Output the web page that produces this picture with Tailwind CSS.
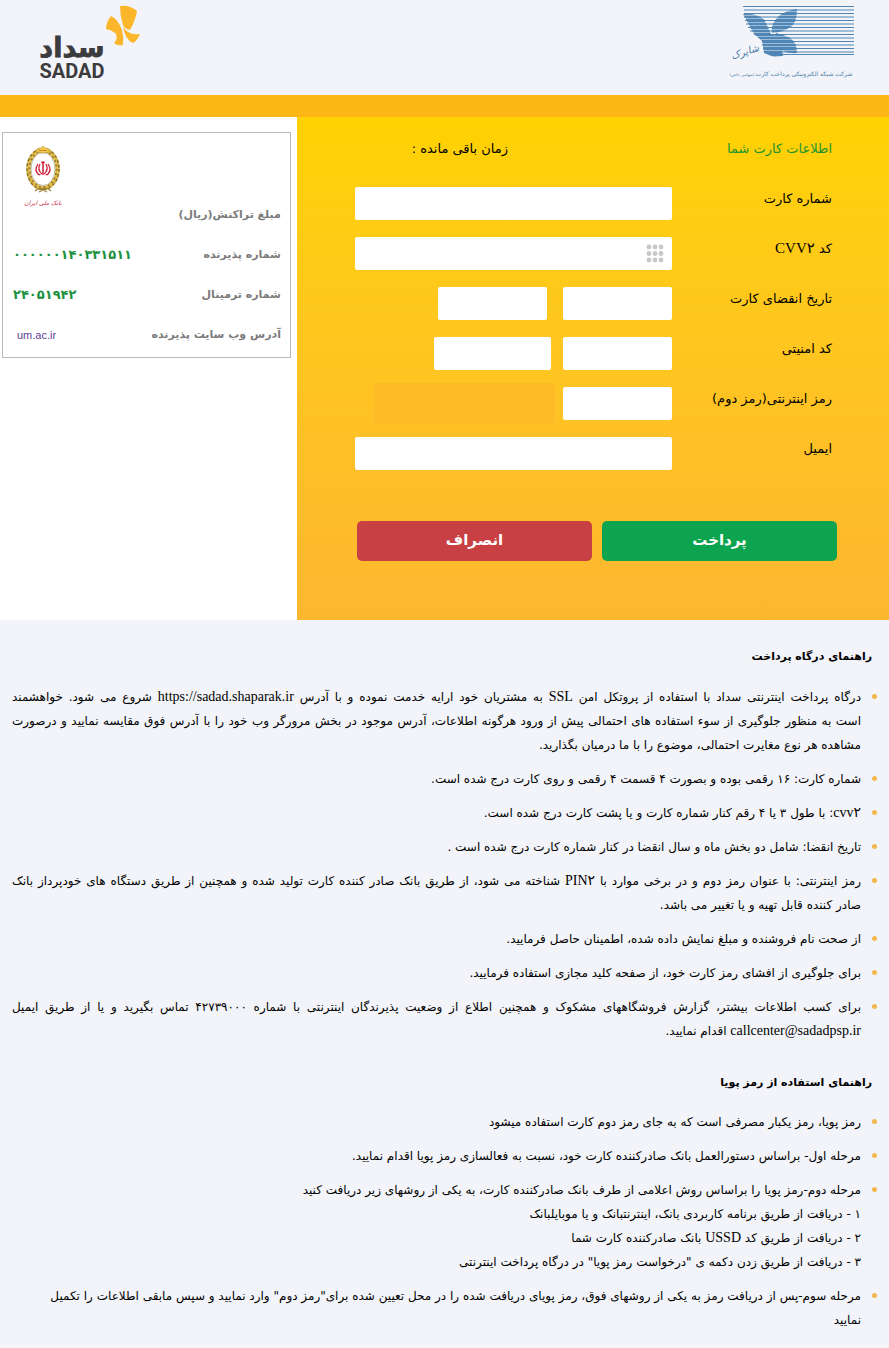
<!DOCTYPE html>
<html lang="fa" dir="rtl">
<head>
<meta charset="utf-8">
<meta name="viewport" content="width=device-width, initial-scale=1">
<title>درگاه پرداخت اینترنتی سداد</title>
<script src="https://cdn.jsdelivr.net/npm/@tailwindcss/browser@4"></script>
</head>
<body class="bg-[#f2f4f9] font-['DejaVu_Sans',sans-serif] text-xs text-black">
<header class="flex h-[95px] items-start justify-between pt-1 pr-[35px] pl-9">
  <svg class="h-[80px] w-[124px] overflow-visible" viewBox="0 0 124 80" role="img" aria-label="شاپرک">
    <defs>
      <clipPath id="wing"><path d="M13 10Q30 9 35 17L41 30L50 33L53 52L44 53L34 49L32 37L24 30Z"/><path d="M67 5Q67 17 62 22Q52 29 42 29Q40 20 50 11Q58 6 67 5Z"/><path d="M46 29Q62 32 66 41L67 49Q56 50 48 44L42 40Z"/></clipPath>
    </defs>
    <g stroke="#4f86b5" stroke-width="1.200">
      <path d="M13 2.500H124M14 6H124M14 9.500H124M14 13H124M15 16.500H124M16 20H124M18 23.500H124M20 27H124M24 30.500H124M30 34H124M32 37.500H124M32 41H124M33 44.500H124M36 48H124M42 50.500H124"/>
      <path clip-path="url(#wing)" stroke-width="2.900" d="M8 6H95M8 9.500H95M8 13H95M8 16.500H95M8 20H95M8 23.500H95M8 27H95M8 30.500H95M8 34H95M8 37.500H95M8 41H95M8 44.500H95M8 48H95M8 51H95"/>
    </g>
    <g fill="#4a7daa" font-family="DejaVu Sans" text-anchor="middle" direction="rtl">
      <text x="16" y="51" font-size="10" font-style="italic" transform="rotate(-18 16 51)">شاپرک</text>
      <text x="74" y="72" font-size="6">شرکت شبکه الکترونیکی پرداخت کارت</text>
      <text x="12" y="72" font-size="4">(سهامی خاص)</text>
    </g>
  </svg>
  <svg class="h-[80px] w-[106px]" viewBox="0 0 106 80" role="img" aria-label="سداد SADAD">
    <g fill="#3c3b3d" font-weight="bold" text-anchor="middle">
      <text x="36" y="53" font-family="DejaVu Sans" font-size="27" direction="rtl" stroke="#3c3b3d" stroke-width=".8">سداد</text>
      <text x="36" y="74" font-family="Roboto" font-size="20" direction="ltr">SADAD</text>
    </g>
    <path fill="#fcb62b" d="M84 2Q94 1 101 7Q100 15 94 26Q89 25 87 21Q84 12 84 2ZM75 12Q82 15 86 26Q88 34 87 41Q81 42 78 39Q82 35 80 30Q76 26 70 25Q70 18 75 12ZM87 22Q92 32 104 30Q101 37 97 39Q89 36 87 22Z"/>
  </svg>
</header>
<div class="h-[22px] bg-[#fdb714]"></div>

<main class="flex bg-white">
  <form class="flex-1 bg-linear-to-b from-[#ffd200] to-[#fdb72f] pr-[57px] pb-[59px] text-[13px]">
    <div class="flex h-[70px] pt-5 leading-6">
      <h1 class="w-[324px] text-[#1d9430]">اطلاعات کارت شما</h1>
      <p>زمان باقی مانده :</p>
    </div>
    <div class="flex flex-col gap-[17px]">
      <div class="flex h-[33px]">
        <label for="card" class="w-[160px] leading-6">شماره کارت</label>
        <input id="card" class="w-[317px] rounded-xs bg-white px-2">
      </div>
      <div class="flex h-[33px]">
        <label for="cvv" class="w-[160px] leading-6">کد <span class="font-['Liberation_Serif','DejaVu_Sans',serif] text-[15px] leading-none">CVV۲</span></label>
        <div class="relative flex">
          <input id="cvv" class="w-[317px] rounded-xs bg-white pr-9 pl-2">
          <button type="button" aria-label="صفحه کلید مجازی" class="absolute top-[7px] right-[7px]">
            <svg class="size-[19px]" viewBox="0 0 19 19" fill="#c8c8c8"><circle cx="3" cy="3" r="2.400"/><circle cx="9" cy="3" r="2.400"/><circle cx="15" cy="3" r="2.400"/><circle cx="3" cy="9.500" r="2.400"/><circle cx="9" cy="9.500" r="2.400"/><circle cx="15" cy="9.500" r="2.400"/><circle cx="3" cy="16" r="2.400"/><circle cx="9" cy="16" r="2.400"/><circle cx="15" cy="16" r="2.400"/></svg>
          </button>
        </div>
      </div>
      <div class="flex h-[33px]">
        <label for="month" class="w-[160px] leading-6">تاریخ انقضای کارت</label>
        <input id="month" class="w-[109px] rounded-xs bg-white px-2">
        <input aria-label="سال انقضا" class="mr-4 w-[109px] rounded-xs bg-white px-2">
      </div>
      <div class="flex h-[33px]">
        <label for="captcha" class="w-[160px] leading-6">کد امنیتی</label>
        <input id="captcha" class="w-[109px] rounded-xs bg-white px-2">
        <div class="mr-3 w-[117px] rounded-xs bg-white"></div>
      </div>
      <div class="flex h-[33px]">
        <label for="pin" class="w-[160px] leading-6">رمز اینترنتی(رمز دوم)</label>
        <input id="pin" type="password" class="w-[109px] rounded-xs bg-white px-2">
        <div class="-my-1 mr-2 w-[181px] bg-[#fdbb28]"></div>
      </div>
      <div class="flex h-[33px]">
        <label for="email" class="w-[160px] leading-6">ایمیل</label>
        <input id="email" type="email" class="w-[317px] rounded-xs bg-white px-2">
      </div>
    </div>
    <div class="-mr-[5px] mt-[51px] flex gap-[10px] text-[15px] font-bold text-white">
      <button type="submit" class="h-10 w-[235px] rounded-[5px] bg-[#0ca44e]">پرداخت</button>
      <button type="button" class="h-10 w-[235px] rounded-[5px] bg-[#c84043]">انصراف</button>
    </div>
  </form>
  <aside class="w-[33.4%] pt-[15px] pr-[6px] pl-[2px]">
    <div class="border border-[#b9b9bb] pr-[9px] pb-[2px] pl-[10px] text-[11px] font-bold text-[#7b7b7b]">
      <div class="flex h-[110px] justify-between pt-3">
        <div class="self-end pb-4 leading-6">مبلغ تراکنش(ریال)</div>
        <svg class="ml-2 h-[64px] w-[44px]" viewBox="0 0 44 64" role="img" aria-label="بانک ملی ایران">
          <ellipse cx="22" cy="24" rx="14.500" ry="19" fill="none" stroke="#e3bd4b" stroke-width="4.500"/>
          <ellipse cx="22" cy="24" rx="16" ry="20.500" fill="none" stroke="#8b742f" stroke-width="1.500" stroke-dasharray="3 2"/>
          <ellipse cx="22" cy="24" rx="13.500" ry="18" fill="none" stroke="#8b742f" stroke-width="2" stroke-dasharray="1.500 3"/>
          <ellipse cx="22" cy="24" rx="12" ry="16.500" fill="#fff" stroke="#aaa493" stroke-width=".7"/>
          <path d="M15 7Q15 3 20 3L22 1L24 3Q29 3 29 7Q22 9 15 7Z" fill="#efcb45" stroke="#b5923a" stroke-width=".6"/>
          <path d="M18 5.500H26" stroke="#c86b32" stroke-width="1" stroke-dasharray="1.500 .6"/>
          <path d="M14 46Q18 42 22 44Q26 42 30 46M18 43L26 47M26 43L18 47" fill="none" stroke="#9a8034" stroke-width="1.200"/>
          <path d="M22 17V30M20.500 18Q22 16 23.500 18" fill="none" stroke="#d2233c" stroke-width="1.500"/>
          <path d="M19 19Q16 25 21 29M25 19Q28 25 23 29M17 19Q13 25 17 29Q18 30 19.500 29.500M27 19Q31 25 27 29Q26 30 24.500 29.500" fill="none" stroke="#d2233c" stroke-width="1.300"/>
          <text x="22" y="60" font-family="DejaVu Sans" font-size="6" font-style="italic" font-weight="normal" fill="#c8324a" text-anchor="middle" direction="rtl">بانک ملی ایران</text>
        </svg>
      </div>
      <dl class="leading-6">
        <div class="flex h-10 justify-between"><dt>شماره پذیرنده</dt><dd class="text-[13px] text-[#1d9141]">۰۰۰۰۰۰۱۴۰۳۳۱۵۱۱</dd></div>
        <div class="flex h-10 justify-between"><dt>شماره ترمینال</dt><dd class="text-[13px] text-[#1d9141]">۲۴۰۵۱۹۴۲</dd></div>
        <div class="flex h-8 justify-between"><dt>آدرس وب سایت پذیرنده</dt><dd class="pl-1"><a href="#" class="font-['Liberation_Sans',sans-serif] font-normal text-[#5b3f95]">um.ac.ir</a></dd></div>
      </dl>
    </div>
  </aside>
</main>

<section class="pr-[17px] pb-4 pl-3">
  <h2 class="pt-[25px] text-[11px] font-bold leading-6">راهنمای درگاه پرداخت</h2>
  <ul class="flex flex-col gap-[10px] pt-4 pr-[11px] text-justify leading-6 [&>li]:relative [&>li]:before:absolute [&>li]:before:top-[9px] [&>li]:before:-right-4 [&>li]:before:size-[5px] [&>li]:before:rounded-full [&>li]:before:bg-[#f3b750] [&_span]:font-['Liberation_Serif','DejaVu_Sans',serif] [&_span]:text-sm [&_span]:leading-none">
    <li>درگاه پرداخت اینترنتی سداد با استفاده از پروتکل امن <span>SSL</span> به مشتریان خود ارایه خدمت نموده و با آدرس <span>https://sadad.shaparak.ir</span> شروع می شود. خواهشمند است&nbsp;به&nbsp;منظور جلوگیری از سوء استفاده های احتمالی پیش از ورود هرگونه اطلاعات، آدرس موجود در بخش مرورگر وب خود را با آدرس فوق مقایسه نمایید و درصورت مشاهده&nbsp;هر&nbsp;نوع&nbsp;مغایرت احتمالی، موضوع را با ما درمیان بگذارید.</li>
    <li>شماره کارت: ۱۶ رقمی بوده و بصورت ۴ قسمت ۴ رقمی و روی کارت درج شده است.</li>
    <li><span>cvv۲</span>: با طول ۳ یا ۴ رقم کنار شماره کارت و یا پشت کارت درج شده است.</li>
    <li>تاریخ انقضا: شامل دو بخش ماه و سال انقضا در کنار شماره کارت درج شده است .</li>
    <li>رمز اینترنتی: با عنوان رمز دوم و در برخی موارد با <span>PIN۲</span> شناخته می شود، از طریق بانک صادر کننده کارت تولید شده و همچنین از طریق دستگاه های خودپرداز بانک صادر&nbsp;کننده&nbsp;قابل تهیه و یا تغییر می باشد.</li>
    <li>از صحت نام فروشنده و مبلغ نمایش داده شده، اطمینان حاصل فرمایید.</li>
    <li>برای جلوگیری از افشای رمز کارت خود، از صفحه کلید مجازی استفاده فرمایید.</li>
    <li>برای کسب اطلاعات بیشتر، گزارش فروشگاههای مشکوک و همچنین اطلاع از وضعیت پذیرندگان اینترنتی با شماره ۴۲۷۳۹۰۰۰ تماس بگیرید و یا از طریق ایمیل <span>callcenter@sadadpsp.ir</span> اقدام نمایید.</li>
  </ul>
  <h2 class="pt-7 text-[11px] font-bold leading-6">راهنمای استفاده از رمز پویا</h2>
  <ul class="flex flex-col gap-[10px] pt-[15px] pr-[11px] text-justify leading-6 [&>li]:relative [&>li]:before:absolute [&>li]:before:top-[9px] [&>li]:before:-right-4 [&>li]:before:size-[5px] [&>li]:before:rounded-full [&>li]:before:bg-[#f3b750] [&_span]:font-['Liberation_Serif','DejaVu_Sans',serif] [&_span]:text-sm [&_span]:leading-none">
    <li>رمز پویا، رمز یکبار مصرفی است که به جای رمز دوم کارت استفاده میشود</li>
    <li>مرحله اول- براساس دستورالعمل بانک صادرکننده کارت خود، نسبت به فعالسازی رمز پویا اقدام نمایید.</li>
    <li>مرحله دوم-رمز پویا را براساس روش اعلامی از طرف بانک صادرکننده کارت، به یکی از روشهای زیر دریافت کنید<br>۱ - دریافت از طریق برنامه کاربردی بانک، اینترنتبانک و یا موبایلبانک<br>۲ - دریافت از طریق کد <span>USSD</span> بانک صادرکننده کارت شما<br>۳ - دریافت از طریق زدن دکمه ی "درخواست رمز پویا" در درگاه پرداخت اینترنتی</li>
    <li>مرحله سوم-پس از دریافت رمز به یکی از روشهای فوق، رمز پویای دریافت شده را در محل تعیین شده برای"رمز دوم" وارد نمایید و سپس مابقی اطلاعات را تکمیل<br>نمایید</li>
  </ul>
</section>
</body>
</html>
